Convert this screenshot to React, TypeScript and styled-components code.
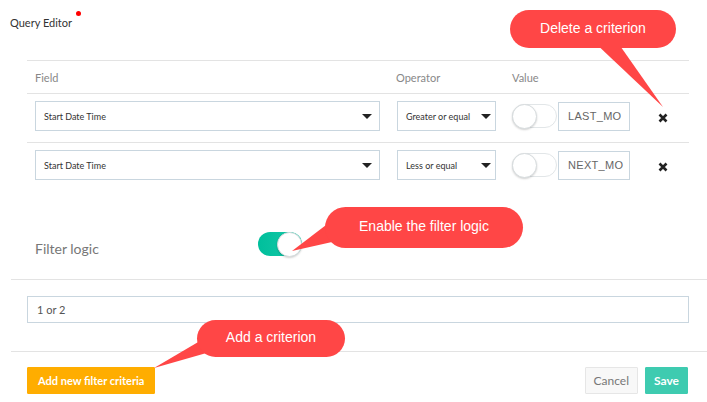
import React from "react";
import styled, { createGlobalStyle } from "styled-components";

const GlobalStyle = createGlobalStyle`
  html, body { margin: 0; padding: 0; background: #fff; }
  body { font-family: Lato, "Open Sans", sans-serif; width: 707px; height: 402px; overflow: hidden; }
  * { box-sizing: border-box; }
`;

const Page = styled.div`
  position: relative;
  width: 707px;
  height: 402px;
`;

const TitleBar = styled.div`
  height: 60px;
  padding: 14px 0 0 10px;
  line-height: 14px;
`;

const Title = styled.span`
  position: relative;
  font-size: 11px;
  line-height: 14px;
  color: #333;
`;

const Dot = styled.span`
  position: absolute;
  right: -9px;
  top: -5px;
  width: 5px;
  height: 5px;
  border-radius: 50%;
  background: #f00;
`;

const Table = styled.div`
  margin: 0 18px 0 27px;
  border-top: 1px solid #e3e3e3;
`;

const Cols = styled.div<{ $head?: boolean; $line?: boolean }>`
  display: grid;
  grid-template-columns: 345px 100px 118px 1fr;
  column-gap: 16px;
  padding-left: 8px;
  padding-top: ${(p) => (p.$head ? "0" : "7px")};
  align-items: ${(p) => (p.$head ? "center" : "start")};
  height: ${(p) => (p.$head ? "33px" : "49px")};
  border-bottom: ${(p) => (p.$line ? "1px solid #e3e3e3" : "none")};
`;

const HeadCell = styled.div`
  font-size: 11px;
  color: #888;
`;

const Select = styled.div`
  height: 30px;
  border: 1px solid #c9d6df;
  display: flex;
  align-items: center;
  justify-content: space-between;
  padding: 0 7px 0 8px;
  font-size: 9px;
  color: #333;
`;

const OpSelect = styled(Select)`
  margin-left: 1px;
  padding: 0 4px 0 8px;
`;

const Caret = styled.span`
  width: 0;
  height: 0;
  border-left: 5px solid transparent;
  border-right: 5px solid transparent;
  border-top: 5px solid #222;
`;

const ValueCell = styled.div`
  display: flex;
  align-items: center;
  height: 30px;
`;

const Track = styled.div<{ $on?: boolean; $w: number }>`
  position: relative;
  width: ${(p) => p.$w}px;
  height: 24px;
  border-radius: 12px;
  background: ${(p) => (p.$on ? "linear-gradient(90deg,#00bf9c,#1ac9a8)" : "#fff")};
  border: ${(p) => (p.$on ? "none" : "1px solid #e2e6e8")};
  flex: none;
`;

const Knob = styled.div<{ $on?: boolean }>`
  position: absolute;
  top: ${(p) => (p.$on ? "0" : "-1px")};
  ${(p) => (p.$on ? "right: 0;" : "left: -1px;")}
  width: 25px;
  height: 25px;
  border-radius: 50%;
  background: #fff;
  border: 1px solid #d7dcde;
  box-shadow: 0 1px 2px rgba(0, 0, 0, 0.18);
`;

const ValueInput = styled.div`
  width: 74px;
  height: 29px;
  margin-left: 1px;
  border: 1px solid #c9d6df;
  display: flex;
  align-items: center;
  padding-left: 9px;
  font-family: "Liberation Sans", Arial, sans-serif;
  font-size: 11px;
  letter-spacing: 0.3px;
  color: #666;
`;

const DeleteCell = styled.div`
  padding-left: 12px;
  height: 30px;
  padding-top: 4px;
  display: flex;
  align-items: center;
`;

const LogicRow = styled.div`
  display: flex;
  align-items: center;
  height: 87px;
  padding: 17px 0 0 35px;
`;

const LogicLabel = styled.div`
  width: 223px;
  font-size: 14px;
  color: #777;
  padding-top: 9px;
`;

const Separator = styled.div`
  margin-left: 11px;
  border-top: 1px solid #e3e3e3;
`;

const LogicInputWrap = styled.div`
  height: 71px;
  padding: 16px 18px 0 27px;
`;

const LogicInput = styled.div`
  height: 27px;
  border: 1px solid #c9d6df;
  display: flex;
  align-items: center;
  padding-left: 9px;
  font-size: 11px;
  color: #555;
`;

const Footer = styled.div`
  display: flex;
  align-items: center;
  padding: 15px 19px 0 27px;
  gap: 7px;
`;

const Button = styled.button<{ $kind: "warn" | "plain" | "ok" }>`
  height: 27px;
  border-radius: 1px;
  font-family: Lato, sans-serif;
  font-size: ${(p) => (p.$kind === "warn" ? "11px" : "12px")};
  font-weight: ${(p) => (p.$kind === "plain" ? 400 : 700)};
  padding: 0 ${(p) => (p.$kind === "warn" ? "10px" : "8px")};
  border: 1px solid
    ${(p) => (p.$kind === "warn" ? "#ffad00" : p.$kind === "ok" ? "#3ecbb0" : "#e6e6e6")};
  background: ${(p) => (p.$kind === "warn" ? "#ffad00" : p.$kind === "ok" ? "#3ecbb0" : "#f8f8f8")};
  color: ${(p) => (p.$kind === "plain" ? "#777" : "#fff")};
  cursor: pointer;
`;

const Spacer = styled.div`
  flex: 1;
`;

const PointerLayer = styled.svg`
  position: absolute;
  left: 0;
  top: 0;
  pointer-events: none;
`;

const Bubble = styled.div<{ $x: number; $y: number; $w: number; $h: number }>`
  position: absolute;
  left: ${(p) => p.$x}px;
  top: ${(p) => p.$y}px;
  width: ${(p) => p.$w}px;
  height: ${(p) => p.$h}px;
  border-radius: ${(p) => p.$h / 2}px;
  background: #ff4646;
  color: #fff;
  font-family: "Liberation Sans", Arial, sans-serif;
  font-size: 14px;
  display: flex;
  align-items: center;
  justify-content: center;
  padding-bottom: 3px;
`;

const CloseIcon = () => (
  <svg width="10" height="10" viewBox="0 0 10 10">
    <path d="M1.5 1.5 L8.5 8.5 M8.5 1.5 L1.5 8.5" stroke="#222" strokeWidth="2.6" strokeLinecap="butt" />
  </svg>
);

const Toggle = ({ on, w }: { on?: boolean; w: number }) => (
  <Track $on={on} $w={w}>
    <Knob $on={on} />
  </Track>
);

const rows = [
  { op: "Greater or equal", value: "LAST_MO" },
  { op: "Less or equal", value: "NEXT_MO" },
];

export default function App() {
  return (
    <Page>
      <GlobalStyle />
      <TitleBar>
        <Title>
          Query Editor
          <Dot />
        </Title>
      </TitleBar>
      <Table>
        <Cols $head $line>
          <HeadCell>Field</HeadCell>
          <HeadCell>Operator</HeadCell>
          <HeadCell>Value</HeadCell>
          <div />
        </Cols>
        {rows.map((r, i) => (
          <Cols key={i} $line={i === 0}>
            <Select>
              <span>Start Date Time</span>
              <Caret />
            </Select>
            <OpSelect>
              <span>{r.op}</span>
              <Caret />
            </OpSelect>
            <ValueCell>
              <Toggle w={45} />
              <ValueInput>{r.value}</ValueInput>
            </ValueCell>
            <DeleteCell>
              <CloseIcon />
            </DeleteCell>
          </Cols>
        ))}
      </Table>
      <LogicRow>
        <LogicLabel>Filter logic</LogicLabel>
        <Toggle on w={44} />
      </LogicRow>
      <Separator />
      <LogicInputWrap>
        <LogicInput>1 or 2</LogicInput>
      </LogicInputWrap>
      <Separator />
      <Footer>
        <Button $kind="warn">Add new filter criteria</Button>
        <Spacer />
        <Button $kind="plain">Cancel</Button>
        <Button $kind="ok">Save</Button>
      </Footer>

      <PointerLayer width="707" height="402" viewBox="0 0 707 402">
        <polygon points="592,40 616,40 663,107" fill="#ff4646" />
        <polygon points="330,222 332,242 292,251" fill="#ff4646" />
        <polygon points="205,338 210,352 154,368" fill="#ff4646" />
      </PointerLayer>
      <Bubble $x={510} $y={10} $w={166} $h={38}>Delete a criterion</Bubble>
      <Bubble $x={325} $y={207} $w={198} $h={41}>Enable the filter logic</Bubble>
      <Bubble $x={197} $y={320} $w={148} $h={37}>Add a criterion</Bubble>
    </Page>
  );
}
